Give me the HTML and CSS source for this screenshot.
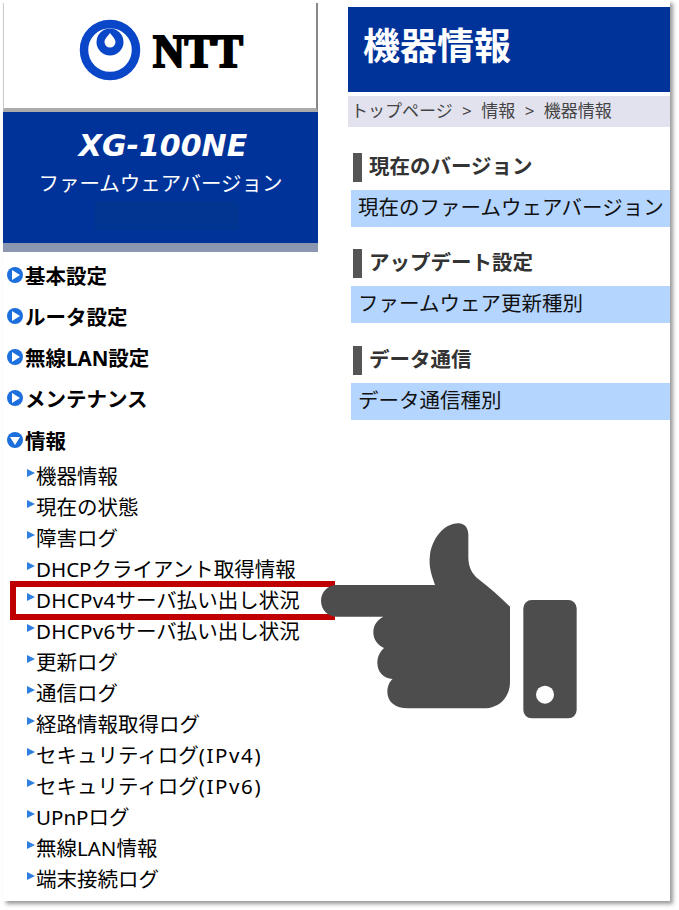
FILE: index.html
```html
<!DOCTYPE html>
<html lang="ja">
<head>
    <meta charset="UTF-8">
    <meta name="viewport" content="width=device-width, initial-scale=1.0">
    <title>機器情報</title>
    <link rel="stylesheet" href="styles.css">
</head>
<body>

<div class="frame">
    <div class="side">
        <div class="logo-box">
            <svg class="logo" width="180" height="80" viewBox="0 0 180 80">
                <circle cx="36" cy="37" r="26" fill="none" stroke="#0a46c8" stroke-width="8.5"/>
                <circle cx="36" cy="29" r="13.5" fill="#0a46c8"/>
                <path fill="#fff" d="M36 20 C39 24 41.5 26 41.5 29 a5.5 5.5 0 0 1 -11 0 C30.5 26 33 24 36 20 Z"/>
                <text class="logo-text" x="79" y="54" textLength="90" lengthAdjust="spacingAndGlyphs">NTT</text>
            </svg>
        </div>
        <div class="model">
            <div class="model-name">XG-100NE</div>
            <div class="model-sub">ファームウェアバージョン</div>
            <div class="model-mark"></div>
        </div>

        <ul class="menu">
            <li><span class="dot"></span>基本設定</li>
            <li><span class="dot"></span>ルータ設定</li>
            <li><span class="dot"></span>無線LAN設定</li>
            <li><span class="dot"></span>メンテナンス</li>
            <li><span class="dot open"></span>情報</li>
        </ul>
        <ul class="submenu">
            <li>機器情報</li>
            <li>現在の状態</li>
            <li>障害ログ</li>
            <li>DHCPクライアント取得情報</li>
            <li><span class="lat">DHCPv4</span>サーバ払い出し状況</li>
            <li><span class="lat">DHCPv6</span>サーバ払い出し状況</li>
            <li>更新ログ</li>
            <li>通信ログ</li>
            <li>経路情報取得ログ</li>
            <li>セキュリティログ<span class="ver">(IPv4)</span></li>
            <li>セキュリティログ<span class="ver">(IPv6)</span></li>
            <li>UPnPログ</li>
            <li>無線LAN情報</li>
            <li>端末接続ログ</li>
        </ul>
    </div>

    <div class="main">
        <h1>機器情報</h1>
        <div class="crumbs">トップページ &gt; 情報 &gt; 機器情報</div>

        <h2>現在のバージョン</h2>
        <div class="row">現在のファームウェアバージョン</div>

        <h2>アップデート設定</h2>
        <div class="row">ファームウェア更新種別</div>

        <h2 class="last">データ通信</h2>
        <div class="row">データ通信種別</div>
    </div>
</div>

<!-- 赤枠と指のアイコンは画面の上に重ねる -->
<div class="highlight"></div>
<svg class="hand" width="300" height="225" viewBox="0 0 900 675">
    <path fill="#4d4d4d" d="M110 225 L405 225 C395 195 385 170 390 135 C395 90 430 40 475 40 C495 40 505 55 505 75 L505 140 C505 170 515 190 535 207 C570 235 600 260 630 290 L630 515 C630 560 600 595 550 595 L325 595 C285 595 262 575 262 545 C262 530 268 515 278 507 C250 505 232 485 232 458 C232 440 240 425 252 414 C232 405 220 388 220 367 C220 345 232 330 250 320 L110 320 C85 320 63 300 63 272 C63 245 85 225 110 225 Z"/>
    <rect x="670" y="270" width="160" height="355" rx="25" fill="#4d4d4d"/>
    <circle cx="735" cy="554" r="27" fill="#fff"/>
</svg>

</body>
</html>
```

FILE: styles.css
```css
body {
    margin: 0;
    width: 679px;
    height: 910px;
    overflow: hidden;
    background-color: #fff;
    color: #000;
    font-family: "Noto Sans", "Noto Sans CJK JP", sans-serif;
}
.frame {
    display: flex;
    gap: 30px;
    width: 667px;
    height: 901px;
    margin-left: 3px;
    background-color: #fff;
    box-shadow: 3px 3px 4px #999;
}
.side {
    width: 315px;
    flex: none;
}
.logo-box {
    box-sizing: border-box;
    height: 109px;
    margin-top: 3px;
    padding: 10px 0 0 70px;
    border-left: 1px solid #ccc;
    border-right: 2px solid #888;
    border-bottom: 4px solid #aaa;
}
.logo {
    display: block;
}
.logo-text {
    font-family: "Liberation Serif", serif;
    font-weight: bold;
    font-size: 46px;
    fill: #000;
    stroke: #000;
    stroke-width: 2.2px;
}
.model {
    height: 140px;
    box-sizing: border-box;
    border-bottom: 9px solid #8b97b1;
    background-color: #003399;
    color: #fff;
    text-align: center;
    padding-top: 14px;
}
.model-name {
    padding-left: 5px;
    font-family: "DejaVu Sans", sans-serif;
    font-size: 30px;
    font-weight: bold;
    font-style: italic;
    line-height: 40px;
}
.model-sub {
    font-size: 20.5px;
    line-height: 34px;
}
.model-mark {
    width: 144px;
    height: 29px;
    margin: 1px 0 0 92px;
    background-color: #023492;
}
.menu, .submenu {
    list-style: none;
    margin: 0;
    padding: 0;
}
.menu {
    padding-top: 2px;
}
.menu li {
    display: flex;
    align-items: center;
    height: 41px;
    padding-left: 4px;
    font-size: 20.5px;
    font-weight: bold;
}
.menu li:last-child {
    padding-top: 1px;
    padding-bottom: 1px;
}
.dot {
    width: 16px;
    height: 16px;
    margin-right: 2px;
    border-radius: 50%;
    background-color: #1c6fdc;
    position: relative;
    flex: none;
}
.dot::after {
    content: "";
    position: absolute;
    left: 5px;
    top: 3px;
    border-left: 8px solid #fff;
    border-top: 5px solid transparent;
    border-bottom: 5px solid transparent;
}
.dot.open::after {
    left: 3px;
    top: 5px;
    border-top: 8px solid #fff;
    border-bottom: 0;
    border-left: 5px solid transparent;
    border-right: 5px solid transparent;
}
.submenu li {
    height: 31px;
    line-height: 31px;
    padding-left: 33px;
    font-size: 20.5px;
    white-space: nowrap;
    position: relative;
}
.submenu li::before {
    content: "";
    position: absolute;
    left: 24px;
    top: 8px;
    border-left: 8px solid #2f7fe0;
    border-top: 4px solid transparent;
    border-bottom: 4px solid transparent;
}
.lat {
    letter-spacing: 0.3px;
}
.ver {
    letter-spacing: 1.6px;
}
.main {
    flex: 1;
    padding-top: 7px;
}
h1 {
    box-sizing: border-box;
    height: 85px;
    margin: 0;
    padding: 0 0 0 15px;
    background-color: #003399;
    color: #fff;
    font-size: 37px;
    line-height: 78px;
    font-weight: bold;
}
.crumbs {
    height: 31px;
    margin-top: 4px;
    padding-left: 3px;
    background-color: #e2e2ee;
    color: #444;
    font-size: 17px;
    line-height: 30px;
    word-spacing: 5px;
    white-space: nowrap;
}
h2 {
    height: 29px;
    margin: 26px 0 8px 5px;
    padding-left: 7px;
    border-left: 9px solid #555;
    color: #333;
    font-size: 20.5px;
    line-height: 27px;
    font-weight: bold;
}
.row {
    height: 37px;
    margin-left: 3px;
    padding-left: 7px;
    background-color: #b4d5fe;
    color: #111;
    font-size: 20.5px;
    line-height: 35px;
    white-space: nowrap;
}
.row + h2 {
    margin-top: 22px;
}
.row + h2.last {
    margin-top: 23px;
}
.highlight {
    position: absolute;
    left: 10px;
    top: 581px;
    width: 325px;
    height: 39px;
    box-sizing: border-box;
    border: 6px solid #c00000;
}
.hand {
    position: absolute;
    left: 300px;
    top: 510px;
}
```
